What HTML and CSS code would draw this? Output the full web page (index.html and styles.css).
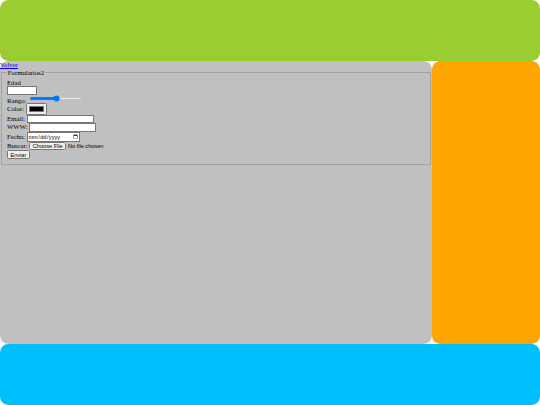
FILE: index.html
```html
<!DOCTYPE html>
<html lang="es">
<head>
<meta charset="utf-8">
<title>Formularios2</title>
<link rel="stylesheet" href="styles.css">
</head>
<body>
<div class="page">
  <header class="top"></header>
  <main class="main">
    <div class="scaled">
      <a href="#" class="back">Volver</a>
      <form class="form">
        <fieldset class="box">
          <legend>Formularios2</legend>
          <label for="edad">Edad</label><br>
          <input type="number" id="edad" class="num" min="0" max="120"><br>
          <label for="rango">Rango:</label>
          <input type="range" id="rango"><br>
          <label for="color">Color:</label>
          <input type="color" id="color"><br>
          <label for="email">Email:</label>
          <input type="email" id="email" class="txt"><br>
          <label for="www">WWW:</label>
          <input type="url" id="www" class="txt"><br>
          <label for="fecha">Fecha:</label>
          <input type="date" id="fecha"><br>
          <label for="buscar">Buscar:</label>
          <input type="file" id="buscar"><br>
          <input type="submit" value="Enviar">
        </fieldset>
      </form>
    </div>
  </main>
  <aside class="side"></aside>
  <footer class="bottom"></footer>
</div>
</body>
</html>
```
FILE: styles.css
```css
html, body {
  margin: 0;
  padding: 0;
  height: 100%;
  background: #ffffff;
}
body {
  font-family: "Liberation Serif", "Times New Roman", serif;
}
.page {
  display: grid;
  height: 100vh;
  grid-template-columns: 80% 20%;
  grid-template-rows: 15% 70% 15%;
}
.top {
  grid-column: 1 / 3;
  background: #9acd32;
  border-radius: 8.4px;
}
.main {
  background: #c0c0c0;
  border-radius: 8.4px;
}
.side {
  background: #ffa500;
  border-radius: 8.4px;
}
.bottom {
  grid-column: 1 / 3;
  background: #00bfff;
  border-radius: 8.4px;
}
.scaled {
  zoom: 0.421875;
  font-size: 16px;
}
.back {
  color: #0000ee;
}
.form {
  margin: 4px 0 0;
}
.box {
  margin: 0 2px;
  border: 2px solid #a2a2a2;
}
input, button {
  font-family: "Liberation Sans", Arial, sans-serif;
  font-size: 13.3333px;
}
.num {
  width: 62px;
}
.txt {
  width: 150px;
}
```
